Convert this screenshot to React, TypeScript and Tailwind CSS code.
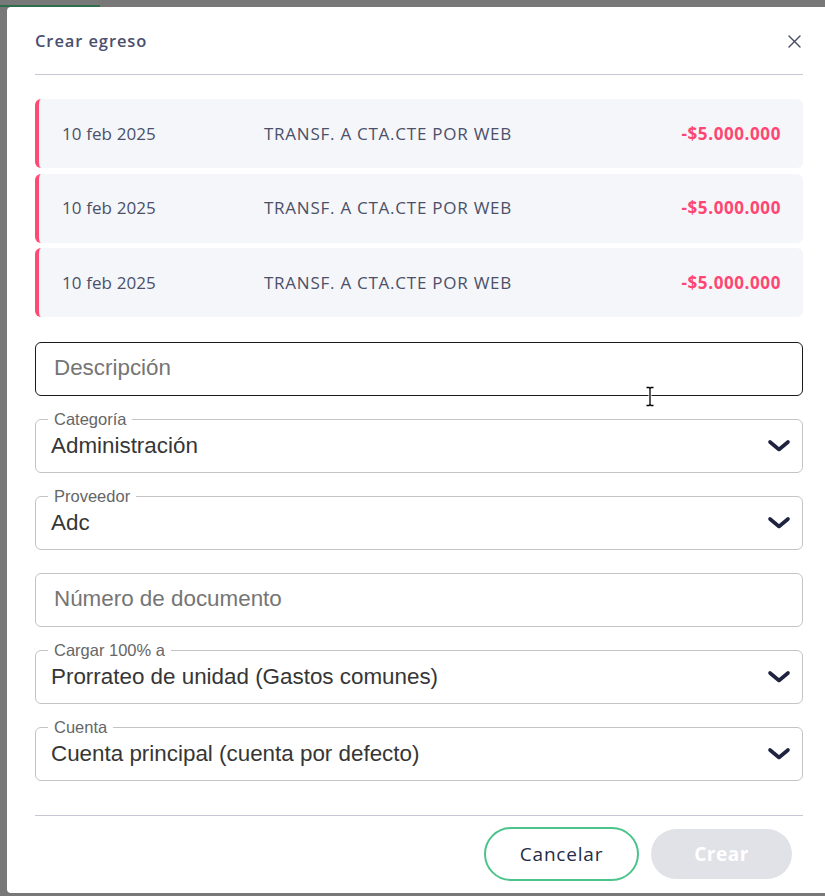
import React from "react";

const Chevron = () => (
  <svg width="24" height="13" viewBox="0 0 24 13" fill="none" className="shrink-0">
    <path d="M3 3 L12 10.5 L21 3" stroke="#1f2340" strokeWidth="3.6" strokeLinecap="round" strokeLinejoin="round" />
  </svg>
);

const Row = () => (
  <div className="flex h-[69px] items-center rounded-[6px] border-l-4 border-[#ff4a75] bg-[#f5f6fa] pl-[23px] pr-[22px] font-['Open_Sans',sans-serif] text-[17px] text-[#4b5068]">
    <div className="w-[202px] tracking-[0.1px]">10 feb 2025</div>
    <div className="flex-1 tracking-[0.75px]">TRANSF. A CTA.CTE POR WEB</div>
    <div className="font-bold tracking-[0.6px] text-[#ff4672]">-$5.000.000</div>
  </div>
);

const Field = ({ label, value }: { label: string; value: string }) => (
  <fieldset className="m-0 h-[62px] rounded-[6px] border border-[#c4c4c4] p-0 pb-[7px] font-['Liberation_Sans',Arial,sans-serif]">
    <legend className="ml-[12px] h-[16px] px-[6px] text-[16.5px] leading-[16px] text-[#666666]">{label}</legend>
    <div className="flex h-[37px] items-center justify-between pl-[15px] pr-[11px]">
      <span className="text-[22.4px] text-[#363636]">{value}</span>
      <Chevron />
    </div>
  </fieldset>
);

const PlainInput = ({ placeholder, focused }: { placeholder: string; focused?: boolean }) => (
  <div className="pt-[8px]">
    <div
      className={`flex h-[54px] items-center rounded-[6px] border pb-[2px] pl-[18px] font-['Liberation_Sans',Arial,sans-serif] text-[22.4px] text-[#757575] ${
        focused ? "border-[#1a1a1a]" : "border-[#c4c4c4]"
      }`}
    >
      {placeholder}
    </div>
  </div>
);

export default function App() {
  return (
    <div className="relative h-[896px] w-[825px] overflow-hidden bg-[#787878]">
      <div className="flex h-[7px] items-end">
        <div className="h-[2px] w-[100px] bg-[#2f6e4c]" />
      </div>
      <div className="ml-[7px] flex h-[886px] w-[824px] shrink-0 flex-col rounded-[4px] bg-white px-[28px]">
        <div className="mt-[24px] flex h-[20px] items-center justify-between">
          <span className="font-['Open_Sans',sans-serif] text-[16.5px] font-semibold tracking-[0.9px] text-[#4a4f6e]">Crear egreso</span>
          <svg width="13" height="13" viewBox="0 0 13 13" className="mr-[2px]">
            <path d="M1 1 L12 12 M12 1 L1 12" stroke="#454a5e" strokeWidth="1.4" strokeLinecap="round" />
          </svg>
        </div>
        <div className="mt-[23px] h-px bg-[#c9c7d7]" />
        <div className="mt-[24px] flex flex-col gap-[5.5px]">
          <Row />
          <Row />
          <Row />
        </div>
        <div className="mt-[17px] flex flex-col gap-[15px]">
          <PlainInput placeholder="Descripción" focused />
          <Field label="Categoría" value="Administración" />
          <Field label="Proveedor" value="Adc" />
          <PlainInput placeholder="Número de documento" />
          <Field label="Cargar 100% a" value="Prorrateo de unidad (Gastos comunes)" />
          <Field label="Cuenta" value="Cuenta principal (cuenta por defecto)" />
        </div>
        <div className="mt-[34px] h-px bg-[#c9c7d7]" />
        <div className="mt-[11px] flex items-center justify-end gap-[12px] pr-[11px] font-['Open_Sans',sans-serif] text-[19px]">
          <button className="h-[54px] w-[155px] rounded-full border-2 border-[#4cc38a] bg-white tracking-[0.8px] text-[#262b47]">Cancelar</button>
          <button className="h-[50px] w-[141px] rounded-full bg-[#e1e2e7] font-bold tracking-[0.5px] text-white">Crear</button>
        </div>
      </div>
      <svg className="absolute left-[645px] top-[386px]" width="10" height="21" viewBox="0 0 10 21">
        <path d="M1.5 1.5 H4 L5 2.5 L6 1.5 H8.5 M5 2.5 V18.5 M1.5 19.5 H4 L5 18.5 L6 19.5 H8.5" stroke="white" strokeWidth="3" fill="none" />
        <path d="M1.5 1.5 H4 L5 2.5 L6 1.5 H8.5 M5 2.5 V18.5 M1.5 19.5 H4 L5 18.5 L6 19.5 H8.5" stroke="black" strokeWidth="1.3" fill="none" />
      </svg>
    </div>
  );
}
